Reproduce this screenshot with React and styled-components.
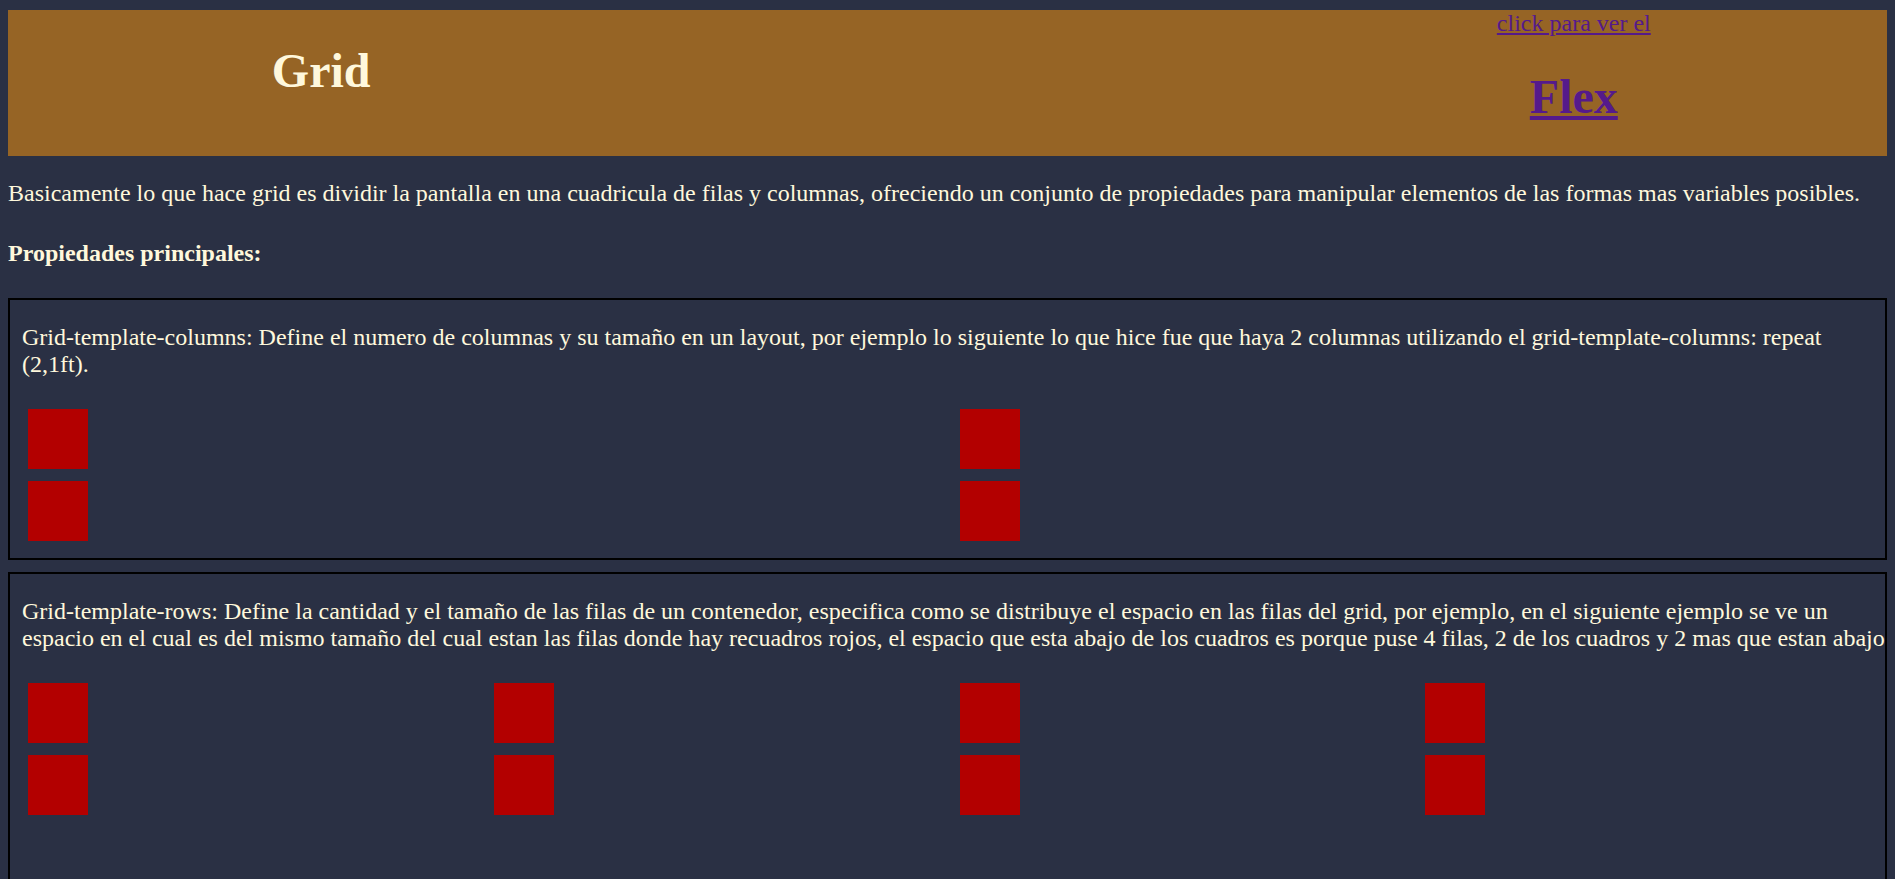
import styled, { createGlobalStyle } from 'styled-components';

const GlobalStyle = createGlobalStyle`
    body {
        margin : 8px ;
        background : #2a3044 ;
        color : #fff8dc ;
        font-family : "Liberation Serif", "Times New Roman", serif ;
        font-size : 24px ;
    }
`

const sections = [
    {
        text : 'Grid-template-columns: Define el numero de columnas y su tamaño en un layout, por ejemplo lo siguiente lo que hice fue que haya 2 columnas utilizando el grid-template-columns: repeat (2,1ft).',
        cols : 2,
        rows : 2,
        squares : 4,
    },
    {
        text : 'Grid-template-rows: Define la cantidad y el tamaño de las filas de un contenedor, especifica como se distribuye el espacio en las filas del grid, por ejemplo, en el siguiente ejemplo se ve un espacio en el cual es del mismo tamaño del cual estan las filas donde hay recuadros rojos, el espacio que esta abajo de los cuadros es porque puse 4 filas, 2 de los cuadros y 2 mas que estan abajo',
        cols : 4,
        rows : 4,
        squares : 8,
    },
]

const App = () => {
    return (
    <>
    <GlobalStyle />
    <Header>
        <Title>Grid</Title>
        <NavSide>
            <HintLink href="#flex">click para ver el</HintLink>
            <FlexTitle><a href="#flex">Flex</a></FlexTitle>
        </NavSide>
    </Header>

    <Intro>
        Basicamente lo que hace grid es dividir la pantalla en una cuadricula de filas y columnas, ofreciendo un conjunto de propiedades para manipular elementos de las formas mas variables posibles.
    </Intro>
    <Subtitle>Propiedades principales:</Subtitle>

    {sections.map((s, i) => (
        <Section key={i} $first={i === 0}>
            <Desc>{s.text}</Desc>
            <Grid $cols={s.cols} $rows={s.rows}>
                {Array.from({length : s.squares}).map((_, j) => (
                    <Square key={j} />
                ))}
            </Grid>
        </Section>
    ))}
    </>
    )
}

export default App

const Header = styled.header`
    margin-top : 2px ;
    background : #966425 ;

    display : grid ;
    grid-template-columns : repeat(3, 1fr) ;
    align-items : start ;
`
const Title = styled.h1`
    grid-column : 1 ;
    margin : 33px 0 0 ;
    font-size : 48px ;
    font-weight : bold ;
    text-align : center ;
    color : #fff8dc ;
`
const NavSide = styled.div`
    grid-column : 3 ;
    text-align : center ;
`
const HintLink = styled.a`
    display : block ;
    width : fit-content ;
    margin : 0 auto ;
    font-size : 24px ;
    color : #551a8b ;
`
const FlexTitle = styled.h1`
    margin : 32px 0 32px ;
    font-size : 48px ;

    a {
        color : #551a8b ;
    }
`
const Intro = styled.p`
    margin : 24px 0 0 ;
`
const Subtitle = styled.p`
    margin : 33px 0 0 ;
    font-weight : bold ;
`
const Section = styled.section`
    margin-top : ${p => p.$first ? '31px' : '12px'} ;
    border : 2px solid #000 ;
    padding : 0 0 11px 12px ;
`
const Desc = styled.p`
    margin : 24px -4px 25px 0 ;
`
const Grid = styled.div`
    display : grid ;
    grid-template-columns : repeat(${p => p.$cols}, 1fr) ;
    grid-template-rows : repeat(${p => p.$rows}, 72px) ;
`
const Square = styled.div`
    width : 60px ;
    height : 60px ;
    margin : 6px ;
    background : #b30000 ;
`
